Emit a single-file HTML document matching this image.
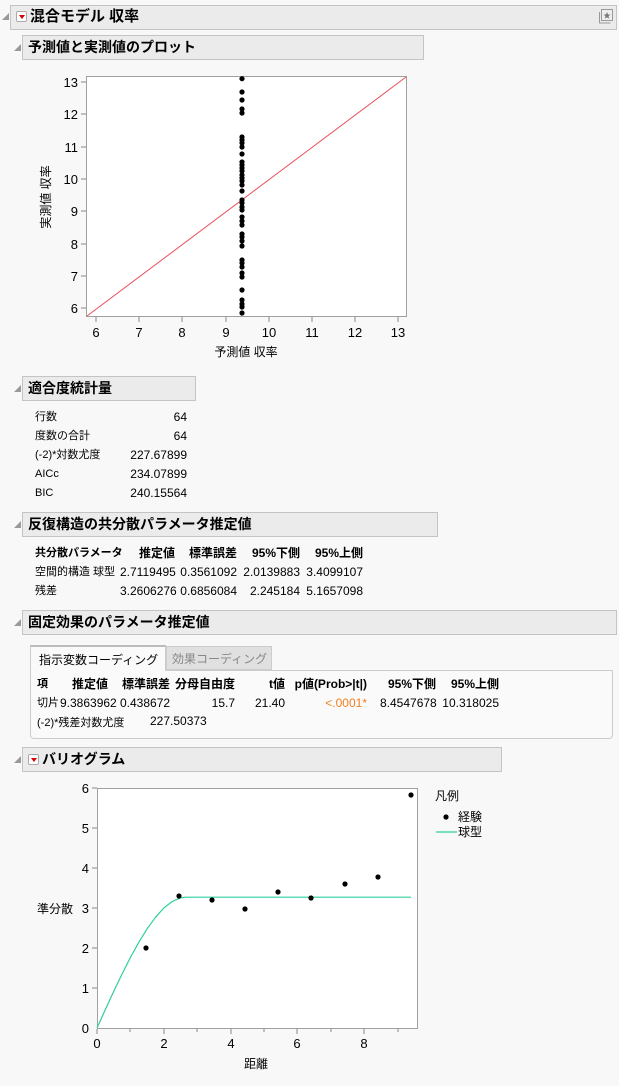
<!DOCTYPE html>
<html><head><meta charset="utf-8"><style>
*{margin:0;padding:0;box-sizing:border-box}
body{width:619px;height:1086px;background:#f8f8f8;position:relative;font-family:"Liberation Sans","Noto Sans CJK JP",sans-serif;font-size:12px;color:#000;overflow:hidden}
.a{position:absolute;white-space:nowrap}
.hd{position:absolute;background:#ebebeb;border:1px solid #c4c4c4;font-weight:bold;font-size:14px;padding-left:5px;line-height:22px}
.tri{position:absolute;width:0;height:0;border-left:7px solid transparent;border-bottom:7px solid #999}
.r{text-align:right}
.s{font-size:11px}
.dd{display:inline-block;width:11px;height:11px;border:1px solid #aaa;border-radius:2px;background:#fff;vertical-align:-1px;margin-right:3px;position:relative}
.dd:after{content:"";position:absolute;left:2px;top:3px;border-left:3px solid transparent;border-right:3px solid transparent;border-top:4px solid #d00}
b{font-weight:bold}
</style></head><body>

<div class="tri" style="left:2px;top:13px"></div>
<div class="hd" style="left:10px;top:5px;width:607px;height:25px;font-size:15px"><span class="dd"></span>混合モデル 収率</div>
<svg class="a" style="left:596px;top:7px" width="20" height="20"><rect x="5.5" y="2.5" width="11" height="11" fill="#eee" stroke="#999"/><path d="M3.5 5v11h11" fill="none" stroke="#999"/><path d="M11 5l1 2.5h2.5l-2 1.6.8 2.6-2.3-1.5-2.3 1.5.8-2.6-2-1.6H10z" fill="#777"/></svg>

<div class="tri" style="left:14px;top:44px"></div>
<div class="hd" style="left:22px;top:35px;width:402px;height:25px">予測値と実測値のプロット</div>

<svg class="a" style="left:0;top:60px" width="430" height="310" font-family="Liberation Sans, Noto Sans CJK JP, sans-serif" font-size="13">
<rect x="86.5" y="16.5" width="320" height="240" fill="#fff" stroke="#a0a0a0"/>
<g stroke="#888">
<line x1="81" x2="86" y1="22" y2="22"/><line x1="81" x2="86" y1="54" y2="54"/><line x1="81" x2="86" y1="87" y2="87"/><line x1="81" x2="86" y1="119" y2="119"/><line x1="81" x2="86" y1="151" y2="151"/><line x1="81" x2="86" y1="184" y2="184"/><line x1="81" x2="86" y1="216" y2="216"/><line x1="81" x2="86" y1="248" y2="248"/>
<line y1="257" y2="262" x1="96" x2="96"/><line y1="257" y2="262" x1="139" x2="139"/><line y1="257" y2="262" x1="182" x2="182"/><line y1="257" y2="262" x1="226" x2="226"/><line y1="257" y2="262" x1="269" x2="269"/><line y1="257" y2="262" x1="312" x2="312"/><line y1="257" y2="262" x1="355" x2="355"/><line y1="257" y2="262" x1="398" x2="398"/>
</g>
<g text-anchor="end"><text x="78" y="27">13</text><text x="78" y="59">12</text><text x="78" y="92">11</text><text x="78" y="124">10</text><text x="78" y="156">9</text><text x="78" y="189">8</text><text x="78" y="221">7</text><text x="78" y="253">6</text></g>
<g text-anchor="middle"><text x="96" y="277">6</text><text x="139" y="277">7</text><text x="182" y="277">8</text><text x="226" y="277">9</text><text x="269" y="277">10</text><text x="312" y="277">11</text><text x="355" y="277">12</text><text x="398" y="277">13</text>
<text x="246" y="296" font-size="12">予測値 収率</text>
<text transform="translate(50,137) rotate(-90)" font-size="12">実測値 収率</text></g>
<line x1="87" y1="256" x2="406" y2="17" stroke="#e8505a" stroke-width="1"/>
<g fill="#000">
<circle cx="242" cy="18.7" r="2.6"/><circle cx="242" cy="32" r="2.6"/><circle cx="242" cy="40" r="2.6"/><circle cx="242" cy="49" r="2.6"/><circle cx="242" cy="53" r="2.6"/>
<circle cx="242" cy="77" r="2.6"/><circle cx="242" cy="80" r="2.6"/><circle cx="242" cy="83" r="2.6"/><circle cx="242" cy="87" r="2.6"/><circle cx="242" cy="94" r="2.6"/>
<circle cx="242" cy="102" r="2.6"/><circle cx="242" cy="105" r="2.6"/><circle cx="242" cy="108" r="2.6"/><circle cx="242" cy="111" r="2.6"/><circle cx="242" cy="115" r="2.6"/><circle cx="242" cy="118" r="2.6"/><circle cx="242" cy="121" r="2.6"/><circle cx="242" cy="125" r="2.6"/><circle cx="242" cy="131" r="2.6"/>
<circle cx="242" cy="140" r="2.6"/><circle cx="242" cy="143" r="2.6"/><circle cx="242" cy="147" r="2.6"/><circle cx="242" cy="150" r="2.6"/><circle cx="242" cy="157" r="2.6"/><circle cx="242" cy="161" r="2.6"/><circle cx="242" cy="165" r="2.6"/>
<circle cx="242" cy="174" r="2.6"/><circle cx="242" cy="177" r="2.6"/><circle cx="242" cy="181" r="2.6"/><circle cx="242" cy="186" r="2.6"/>
<circle cx="242" cy="200" r="2.6"/><circle cx="242" cy="203" r="2.6"/><circle cx="242" cy="207" r="2.6"/><circle cx="242" cy="213" r="2.6"/><circle cx="242" cy="217" r="2.6"/>
<circle cx="242" cy="230" r="2.6"/><circle cx="242" cy="240" r="2.6"/><circle cx="242" cy="244" r="2.6"/><circle cx="242" cy="247" r="2.6"/><circle cx="242" cy="253" r="2.6"/>
</g>
</svg>

<div class="tri" style="left:14px;top:385px"></div>
<div class="hd" style="left:22px;top:376px;width:174px;height:25px">適合度統計量</div>
<div class="a s" style="left:35px;top:408px;line-height:19px">行数<br>度数の合計<br>(-2)*対数尤度<br>AICc<br>BIC</div>
<div class="a r" style="left:110px;width:77px;top:408px;line-height:19px">64<br>64<br>227.67899<br>234.07899<br>240.15564</div>

<div class="tri" style="left:14px;top:521px"></div>
<div class="hd" style="left:22px;top:512px;width:416px;height:25px">反復構造の共分散パラメータ推定値</div>
<div class="a s" style="left:35px;top:544px;line-height:19px"><b>共分散パラメータ</b><br>空間的構造 球型<br>残差</div>
<div class="a r" style="left:120px;width:55px;top:544px;line-height:19px"><b>推定値</b><br>2.7119495<br>3.2606276</div>
<div class="a r" style="left:180px;width:57px;top:544px;line-height:19px"><b>標準誤差</b><br>0.3561092<br>0.6856084</div>
<div class="a r" style="left:240px;width:60px;top:544px;line-height:19px"><b>95%下側</b><br>2.0139883<br>2.245184</div>
<div class="a r" style="left:302px;width:61px;top:544px;line-height:19px"><b>95%上側</b><br>3.4099107<br>5.1657098</div>

<div class="tri" style="left:14px;top:619px"></div>
<div class="hd" style="left:22px;top:610px;width:595px;height:25px">固定効果のパラメータ推定値</div>
<div class="a" style="left:30px;top:670px;width:583px;height:69px;border:1px solid #ccc;border-radius:0 0 4px 4px;background:#fafafa"></div>
<div class="a s" style="left:30px;top:645px;width:136px;height:26px;border:1px solid #ccc;border-top:2px solid #bbb;border-bottom:none;background:#fafafa;padding:4px 0 0 8px;font-size:12px">指示変数コーディング</div>
<div class="a" style="left:166px;top:646px;width:106px;height:24px;border:1px solid #ccc;background:#e0e0e0;color:#888;padding:3px 0 0 5px">効果コーディング</div>
<div class="a s" style="left:37px;top:675px;line-height:19px"><b>項</b><br>切片</div>
<div class="a r" style="left:60px;width:48px;top:675px;line-height:19px"><b>推定値</b><br>9.3863962</div>
<div class="a r" style="left:120px;width:50px;top:675px;line-height:19px"><b>標準誤差</b><br>0.438672</div>
<div class="a r" style="left:175px;width:60px;top:675px;line-height:19px"><b>分母自由度</b><br>15.7</div>
<div class="a r" style="left:240px;width:45px;top:675px;line-height:19px"><b>t値</b><br>21.40</div>
<div class="a r" style="left:290px;width:77px;top:675px;line-height:19px"><b>p値(Prob&gt;|t|)</b><br><span style="color:#f08020">&lt;.0001*</span></div>
<div class="a r" style="left:380px;width:56px;top:675px;line-height:19px"><b>95%下側</b><br>8.4547678</div>
<div class="a r" style="left:440px;width:59px;top:675px;line-height:19px"><b>95%上側</b><br>10.318025</div>
<div class="a s" style="left:37px;top:714px">(-2)*残差対数尤度</div>
<div class="a" style="left:150px;top:714px">227.50373</div>

<div class="tri" style="left:14px;top:756px"></div>
<div class="hd" style="left:22px;top:747px;width:480px;height:25px"><span class="dd"></span>バリオグラム</div>

<svg class="a" style="left:0;top:775px" width="619" height="311" font-family="Liberation Sans, Noto Sans CJK JP, sans-serif" font-size="13">
<rect x="97.5" y="13.5" width="320" height="240" fill="#fff" stroke="#a0a0a0"/>
<g stroke="#888">
<line x1="92" x2="97" y1="13" y2="13"/><line x1="92" x2="97" y1="53" y2="53"/><line x1="92" x2="97" y1="93" y2="93"/><line x1="92" x2="97" y1="133" y2="133"/><line x1="92" x2="97" y1="173" y2="173"/><line x1="92" x2="97" y1="213" y2="213"/>
<line y1="254" y2="259" x1="97" x2="97"/><line y1="254" y2="257" x1="130" x2="130"/><line y1="254" y2="259" x1="164" x2="164"/><line y1="254" y2="257" x1="197" x2="197"/><line y1="254" y2="259" x1="231" x2="231"/><line y1="254" y2="257" x1="264" x2="264"/><line y1="254" y2="259" x1="297" x2="297"/><line y1="254" y2="257" x1="331" x2="331"/><line y1="254" y2="259" x1="364" x2="364"/><line y1="254" y2="257" x1="398" x2="398"/>
</g>
<g text-anchor="end"><text x="89" y="18">6</text><text x="89" y="58">5</text><text x="89" y="98">4</text><text x="89" y="138">3</text><text x="89" y="178">2</text><text x="89" y="218">1</text><text x="89" y="258">0</text></g>
<g text-anchor="middle"><text x="97" y="273">0</text><text x="164" y="273">2</text><text x="231" y="273">4</text><text x="297" y="273">6</text><text x="364" y="273">8</text><text x="256" y="293" font-size="12">距離</text></g>
<text x="37" y="138" font-size="12">準分散</text>
<path d="M97 253L105.4 234.5L113.7 216.4L122.1 199L130.4 182.5L138.8 167.3L147.1 153.8L155.5 142.3L163.8 133L172.2 126.5L180.5 122.8L185.5 122.2L411 122.2" fill="none" stroke="#2ecfa0" stroke-width="1.2" stroke-linejoin="round"/>
<g fill="#000">
<circle cx="146" cy="173" r="2.6"/><circle cx="179" cy="121" r="2.6"/><circle cx="212" cy="125" r="2.6"/><circle cx="245" cy="134" r="2.6"/><circle cx="278" cy="117" r="2.6"/><circle cx="311" cy="123" r="2.6"/><circle cx="345" cy="109" r="2.6"/><circle cx="378" cy="102" r="2.6"/><circle cx="411" cy="20" r="2.6"/>
<circle cx="446" cy="42" r="2.6"/></g>
<text x="435" y="25" font-size="12">凡例</text>
<text x="458" y="46" font-size="12">経験</text>
<line x1="436" x2="457" y1="57" y2="57" stroke="#2ecfa0" stroke-width="1.2"/>
<text x="458" y="61" font-size="12">球型</text>
</svg>
</body></html>
